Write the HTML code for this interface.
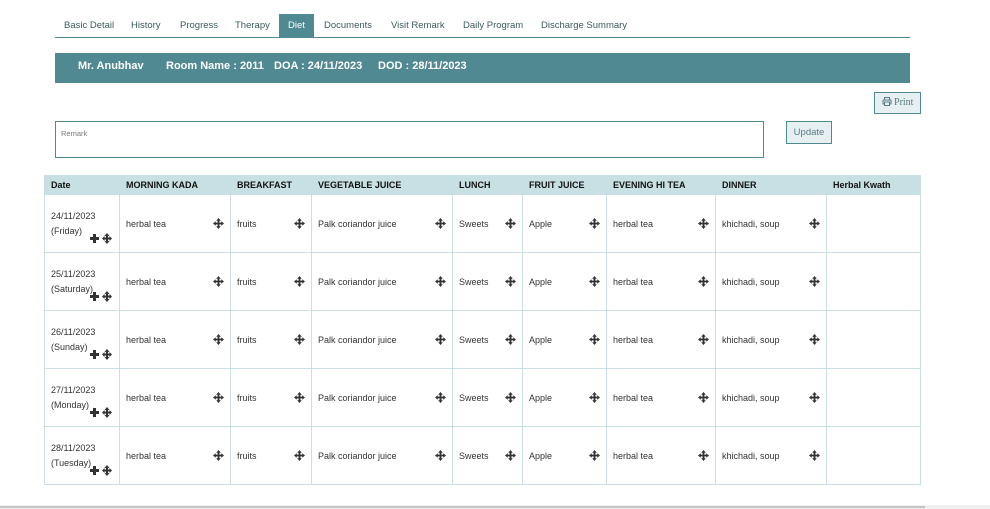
<!DOCTYPE html>
<html><head><meta charset="utf-8"><style>
*{margin:0;padding:0;box-sizing:border-box}
body{width:990px;height:509px;background:#fff;font-family:"Liberation Sans",sans-serif;position:relative;overflow:hidden;color:#222}
.tabs{position:absolute;left:55px;top:14px;width:855px;height:24px;border-bottom:1px solid #4f8a92}
.tab{position:absolute;top:0;height:23px;line-height:23px;font-size:9.5px;color:#3d5a5e}
.tab.on{background:#4f8a92;color:#fff;text-align:center}
.bar{position:absolute;left:55px;top:53px;width:855px;height:30px;background:#508992;color:#fff;font-size:11px;font-weight:bold;line-height:27px}
.bar span{position:absolute;top:0}
.btn{position:absolute;border:1px solid #4f8a92;background:#e6f0f2;color:#5a7c82;font-size:9.5px;text-align:center}
.remark{position:absolute;left:55px;top:121px;width:709px;height:37px;border:1px solid #4f8a92;font-size:7.5px;color:#777;padding:7px 5px}
table{position:absolute;left:44px;top:175px;border-collapse:collapse;width:876px;table-layout:fixed;font-size:9px}
th{background:#c8e0e3;height:19px;text-align:left;padding-left:6px;font-size:9px;color:#111;border:1px solid #c8e0e3}
td{height:58px;border:1px solid #c9dfe2;padding-left:6px;position:relative;color:#333;vertical-align:middle}
.mv{position:absolute;right:6px;top:23px;width:11px;height:11px}
.dt{line-height:15px}
.ic{position:absolute;left:45px;top:38px}
.sb{position:absolute;left:0;top:505px;width:990px;height:4px;background:#f0f0f0}
.sb i{position:absolute;left:0;top:1px;width:925px;height:2px;background:#c4c4c4}
</style></head><body>
<div class="tabs">
<div class="tab" style="left:9px">Basic Detail</div>
<div class="tab" style="left:76px">History</div>
<div class="tab" style="left:125px">Progress</div>
<div class="tab" style="left:180px">Therapy</div>
<div class="tab on" style="left:224px;width:35px">Diet</div>
<div class="tab" style="left:269px">Documents</div>
<div class="tab" style="left:336px">Visit Remark</div>
<div class="tab" style="left:408px">Daily Program</div>
<div class="tab" style="left:486px">Discharge Summary</div>
</div>
<div class="bar"><span style="left:23px">Mr. Anubhav</span><span style="left:111px">Room Name : 2011</span><span style="left:219px">DOA : 24/11/2023</span><span style="left:323px">DOD : 28/11/2023</span></div>
<div class="btn" style="left:874px;top:92px;width:47px;height:22px;line-height:20px;font-family:'Liberation Serif',serif;font-size:10px"><svg width="10" height="9" viewBox="0 0 10 9" style="vertical-align:-1px"><path d="M2.5 3V0.5h5V3M1 3h8v4H7.5M2.5 7H1V3" fill="none" stroke="#5a7c82" stroke-width="1"/><rect x="2.5" y="5" width="5" height="3.5" fill="none" stroke="#5a7c82"/></svg> Print</div>
<div class="remark">Remark</div>
<div class="btn" style="left:786px;top:121px;width:46px;height:23px;line-height:22px">Update</div>
<table>
<colgroup><col style="width:75px"><col style="width:111px"><col style="width:81px"><col style="width:141px"><col style="width:70px"><col style="width:84px"><col style="width:109px"><col style="width:111px"><col style="width:94px"></colgroup>
<tr><th>Date</th><th>MORNING KADA</th><th>BREAKFAST</th><th>VEGETABLE JUICE</th><th>LUNCH</th><th>FRUIT JUICE</th><th>EVENING HI TEA</th><th>DINNER</th><th>Herbal Kwath</th></tr>
</table>
<div class="sb"><i></i></div>
<script>
var mv='<svg class="mv" viewBox="0 0 12 12"><path d="M6 0L8.5 3H7V5H9V3.5L12 6L9 8.5V7H7V9H8.5L6 12L3.5 9H5V7H3V8.5L0 6L3 3.5V5H5V3H3.5Z" fill="#333"/></svg>';
var days=[["24/11/2023","Friday"],["25/11/2023","Saturday"],["26/11/2023","Sunday"],["27/11/2023","Monday"],["28/11/2023","Tuesday"]];
var vals=["herbal tea","fruits","Palk coriandor juice","Sweets","Apple","herbal tea","khichadi, soup"];
var h='';
days.forEach(function(d){
h+='<tr><td class="dt">'+d[0]+'<br>('+d[1]+')<svg class="ic" width="22" height="11" viewBox="0 0 22 11"><path d="M3 1h3v3h3v3H6v3H3V7H0V4h3z" fill="#333"/><path d="M17 0L19.5 3H18V4.5H19.5V3L22 5.5L19.5 8V6.5H18V8H19.5L17 11L14.5 8H16V6.5H14.5V8L12 5.5L14.5 3V4.5H16V3H14.5Z" fill="#333"/></svg></td>';
vals.forEach(function(v){h+='<td>'+v+mv+'</td>';});
h+='<td></td></tr>';
});
document.querySelector('table').insertAdjacentHTML('beforeend',h);
</script>
</body></html>
